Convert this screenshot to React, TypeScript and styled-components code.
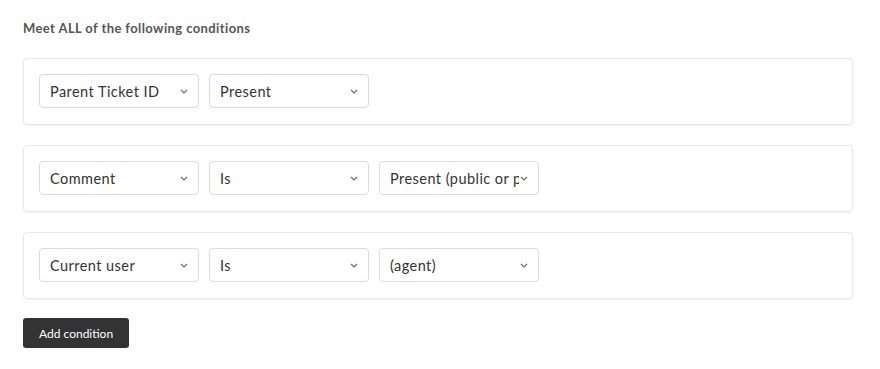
import React from "react";
import styled, { createGlobalStyle } from "styled-components";

const Global = createGlobalStyle`
  body {
    margin: 0;
    background: #fff;
    font-family: Lato, "Open Sans", sans-serif;
  }
`;

const rows: string[][] = [
  ["Parent Ticket ID", "Present"],
  ["Comment", "Is", "Present (public or private)"],
  ["Current user", "Is", "(agent)"],
];

const App: React.FC = () => {
  return (
    <>
      <Global />
      <Page>
        <Title>Meet ALL of the following conditions</Title>
        <List>
          {rows.map((row, i) => (
            <Card key={i}>
              {row.map((v, j) => (
                <Select key={j}>
                  <Value>{v}</Value>
                  <Chevron viewBox="0 0 8 5">
                    <path d="M1 1 4 4 7 1" />
                  </Chevron>
                </Select>
              ))}
            </Card>
          ))}
        </List>
        <AddButton>Add condition</AddButton>
      </Page>
    </>
  );
};

export default App;

const Page = styled.div`
  padding: 20px 27px 0 23px;
`;

const Title = styled.div`
  font-size: 13px;
  font-weight: 700;
  letter-spacing: 0.4px;
  color: #555;
  line-height: 16px;
  margin-bottom: 22px;
`;

const List = styled.div`
  display: flex;
  flex-direction: column;
  gap: 20px;
`;

const Card = styled.div`
  display: flex;
  gap: 10px;
  padding: 15px 15px 16px;
  border: 1px solid #e8e8e8;
  border-radius: 4px;
  box-shadow: 0 1px 2px rgba(0, 0, 0, 0.06);
`;

const Select = styled.div`
  width: 160px;
  height: 34px;
  box-sizing: border-box;
  border: 1px solid #d8dcde;
  border-radius: 4px;
  display: flex;
  align-items: center;
  padding: 0 10px 0 10px;
  color: #333;
  font-size: 14.5px;
  letter-spacing: 0.45px;
`;

const Value = styled.span`
  flex: 1;
  white-space: nowrap;
  overflow: hidden;
`;

const Chevron = styled.svg`
  width: 8px;
  height: 5px;
  margin-left: 1px;
  flex: none;
  fill: none;
  stroke: #666;
  stroke-width: 1.1;
`;

const AddButton = styled.button`
  margin-top: 19px;
  height: 30px;
  padding: 0 16px;
  border: none;
  border-radius: 3px;
  background: #333;
  color: #fff;
  font-family: Lato, "Open Sans", sans-serif;
  font-size: 12px;
`;
